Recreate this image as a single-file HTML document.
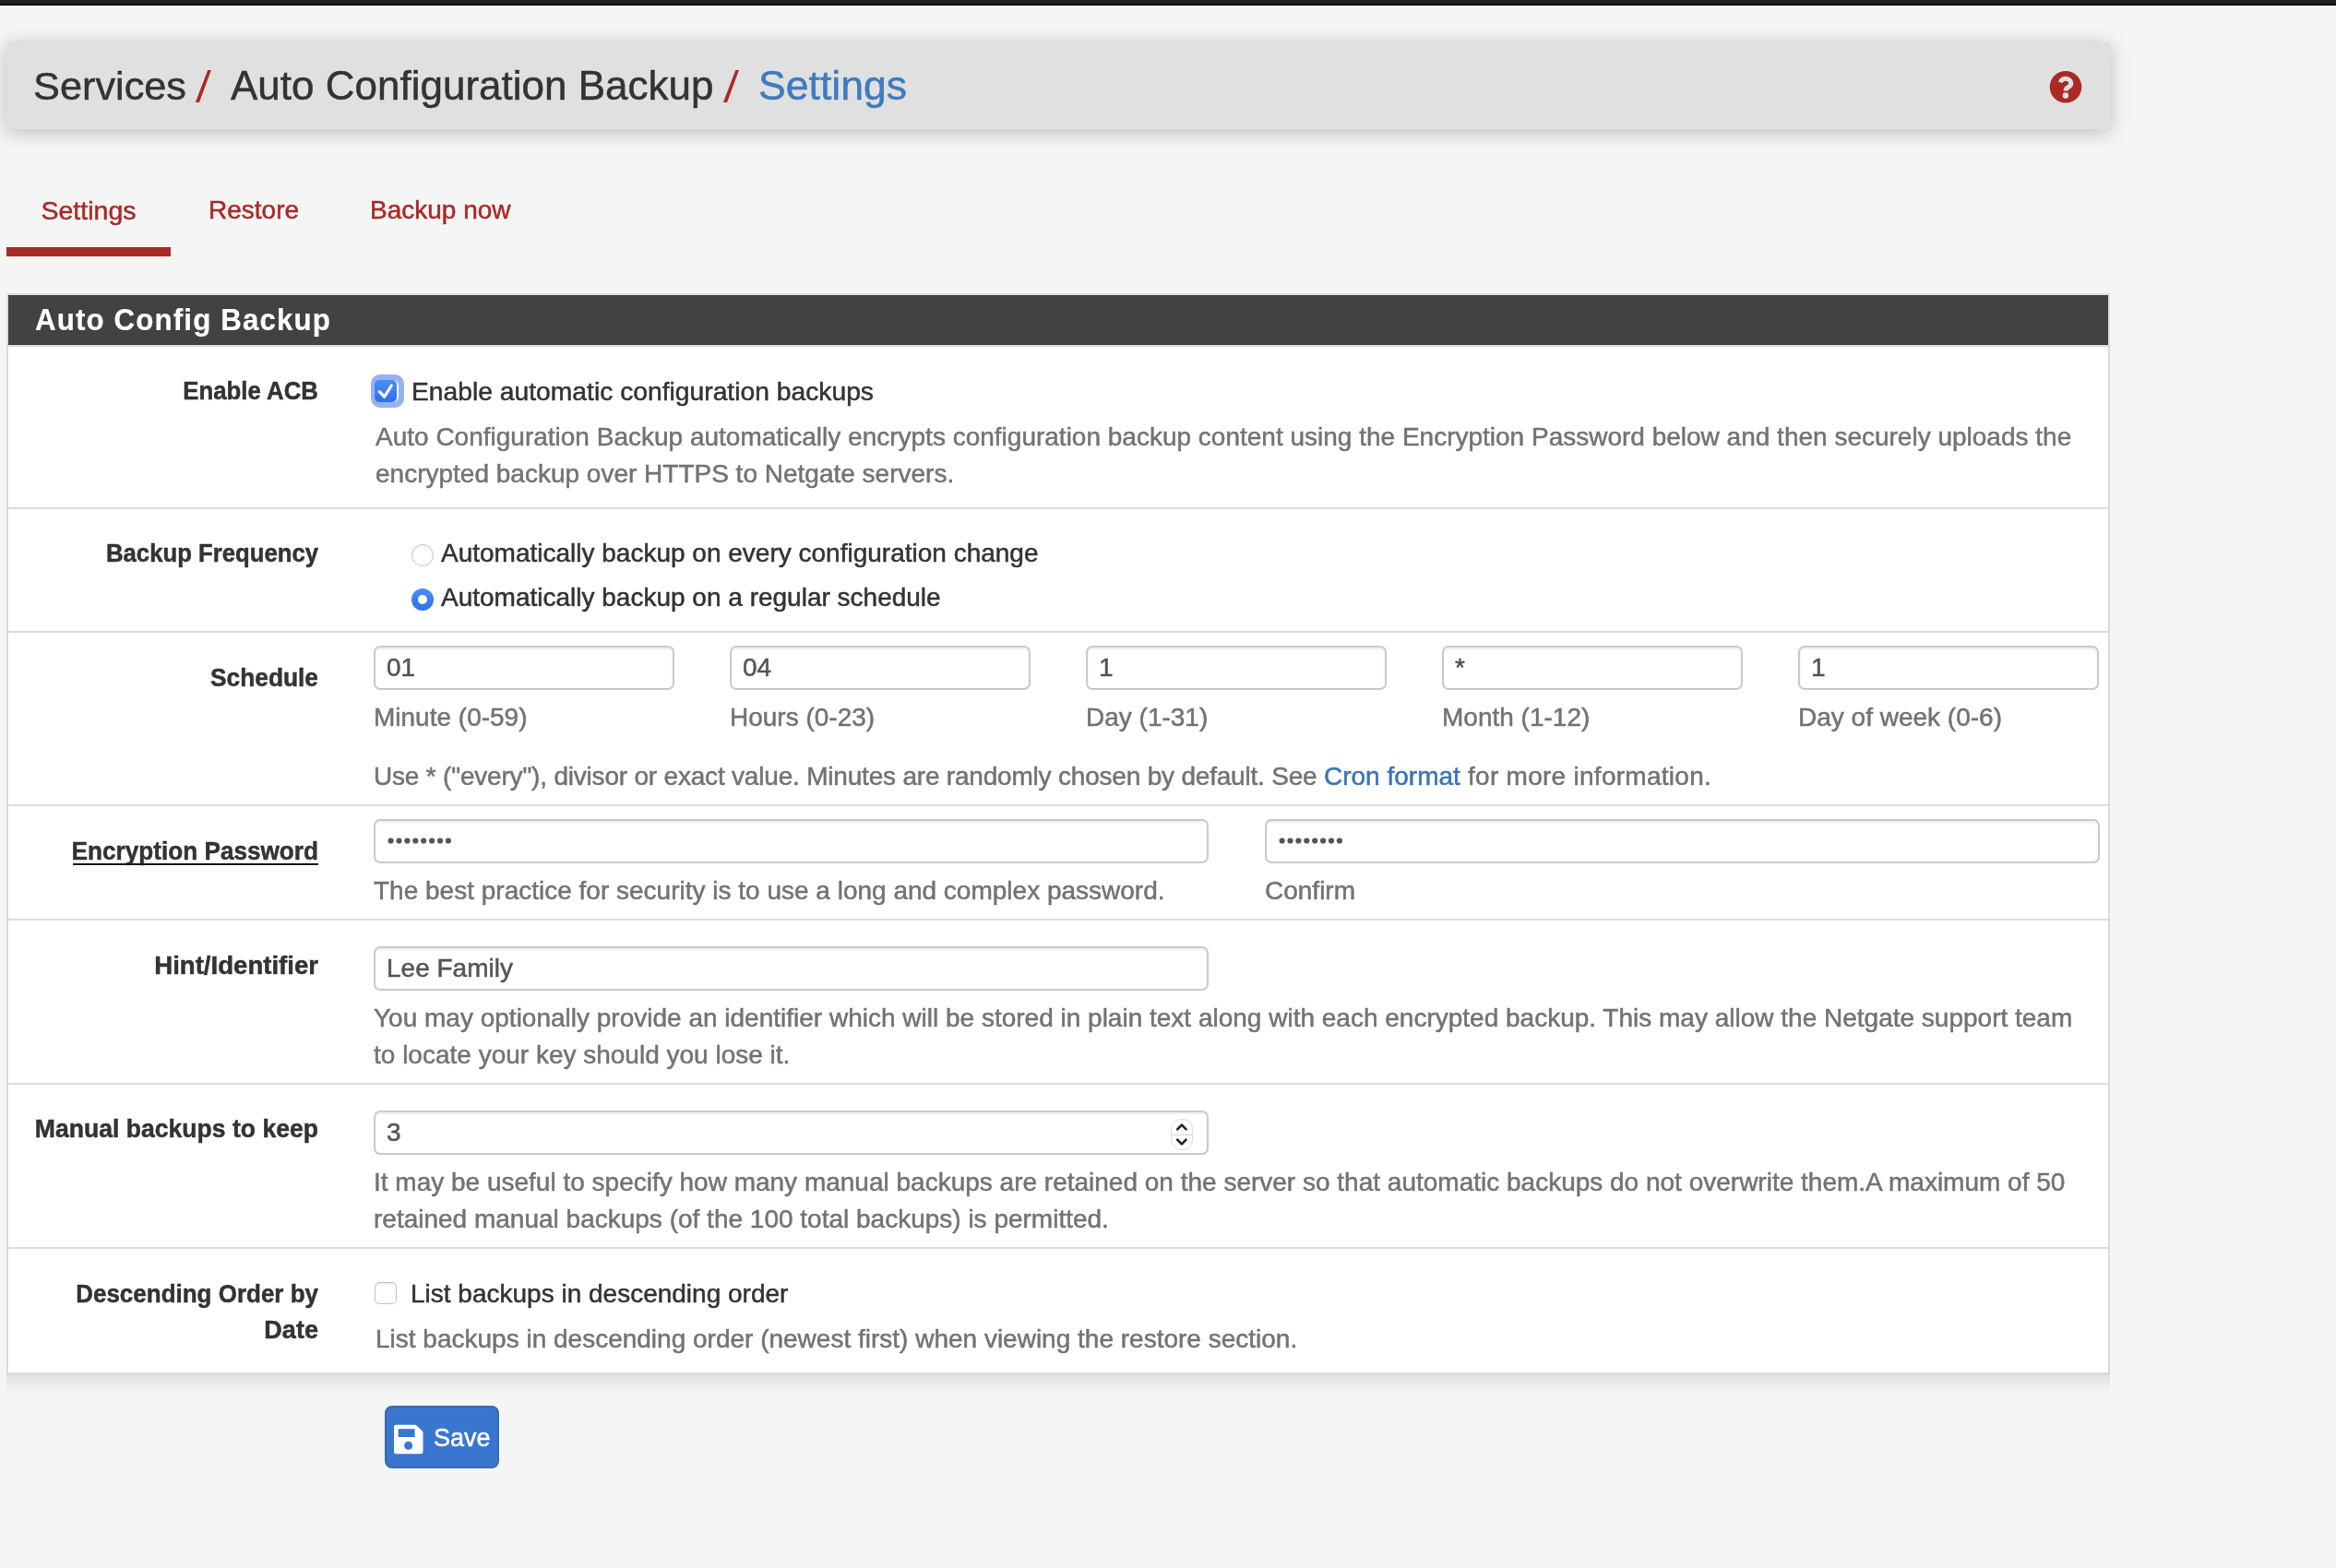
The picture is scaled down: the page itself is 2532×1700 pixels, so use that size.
<!DOCTYPE html>
<html><head><meta charset="utf-8">
<style>
html,body{margin:0;padding:0;background:#f5f5f5;}
body{width:2532px;height:1700px;overflow:hidden;position:relative;font-family:"Liberation Sans",sans-serif;color:#333;}
#w{position:absolute;left:0;top:0;width:2532px;height:1700px;will-change:transform;-webkit-text-stroke-width:0.5px;}
.a{position:absolute;white-space:nowrap;}
.t28{font-size:28px;line-height:28px;}
.bc{position:absolute;white-space:nowrap;font-size:44px;line-height:44px;color:#333;}
.help{position:absolute;white-space:nowrap;font-size:28px;line-height:40px;color:#737373;}
.lbl{position:absolute;left:0;width:345px;text-align:right;font-weight:bold;font-size:28px;line-height:28px;color:#333;white-space:nowrap;transform-origin:345px 0;}
.inp{position:absolute;box-sizing:border-box;background:#fff;border:2px solid #cacaca;border-radius:7px;box-shadow:inset 0 2px 3px rgba(0,0,0,.07);}
.itxt{position:absolute;font-size:28px;line-height:28px;color:#555;white-space:nowrap;}
.sep{position:absolute;left:9px;width:2276px;height:2px;background:#dcdcdc;}
</style></head>
<body><div id="w">
<!-- top bar -->
<div class="a" style="left:0;top:0;width:2532px;height:4px;background:#212121;"></div>
<div class="a" style="left:0;top:4px;width:2532px;height:2px;background:#000;"></div>

<!-- breadcrumb panel -->
<div class="a" style="left:7px;top:46px;width:2280px;height:94px;background:#e0e0e0;box-shadow:0 3px 20px rgba(0,0,0,.24);"></div>
<div class="bc" style="left:36px;top:71px;font-size:43.3px;">Services</div>
<svg class="a" style="left:0;top:0;" width="900" height="130"><polygon points="225.15,76 228.9,76 216,111 211.9,111" fill="#ab2a25"/><polygon points="797.25,76 801,76 788.1,111 784,111" fill="#ab2a25"/></svg>
<div class="bc" style="left:250px;top:71px;font-size:44px;">Auto Configuration Backup</div>
<div class="bc" style="left:822px;top:71px;font-size:44.6px;color:#3e7bbf;">Settings</div>
<!-- help icon -->
<svg class="a" style="left:2221px;top:76px;" width="36" height="36" viewBox="0 0 36 36">
<circle cx="18" cy="18.3" r="17.3" fill="#ab2a25"/>
<path d="M12.2 13.2 A6 5.6 0 0 1 23.9 14.2 C23.9 17 21.6 18.1 19.8 19.2 C18.4 20 18.1 20.8 18.1 22.6" fill="none" stroke="#e0e0e0" stroke-width="5"/>
<circle cx="17.9" cy="27.5" r="3.2" fill="#e0e0e0"/>
</svg>

<!-- tabs -->
<div class="a" style="left:44.5px;top:214px;font-size:28.5px;line-height:28px;color:#a82a27;">Settings</div>
<div class="a t28" style="left:226px;top:214px;color:#a82a27;">Restore</div>
<div class="a t28" style="left:401px;top:214px;color:#a82a27;">Backup now</div>
<div class="a" style="left:7px;top:268px;width:178px;height:10px;background:#a82a27;"></div>

<!-- panel -->
<div class="a" style="left:7px;top:1490px;width:2280px;height:20px;background:linear-gradient(rgba(0,0,0,.085),rgba(0,0,0,0));"></div>
<div class="a" style="left:7px;top:318px;width:2280px;height:1172px;box-sizing:border-box;background:#fff;border:2px solid #dadada;"></div>
<div class="a" style="left:9px;top:320px;width:2276px;height:54px;background:#424242;"></div>
<div class="a" style="left:9px;top:374px;width:2276px;height:2px;background:#dcdcdc;"></div>
<div class="a" style="left:38px;top:330px;font-size:33.3px;line-height:33px;font-weight:bold;color:#fff;letter-spacing:1.2px;transform:scaleX(0.94);transform-origin:0 0;-webkit-text-stroke-width:0.2px;">Auto Config Backup</div>

<!-- row 1 -->
<div class="lbl" style="top:410.3px;transform:scaleX(0.922);">Enable ACB</div>
<div class="a" style="left:402px;top:406px;width:36px;height:36px;border-radius:10px;background:#96b2f2;"></div>
<div class="a" style="left:406px;top:412px;width:26px;height:24px;border-radius:6px;background:#fff;"></div>
<div class="a" style="left:406px;top:412px;width:24px;height:24px;border-radius:5px;background:linear-gradient(#4a8cf4,#2f70ec);"></div>
<svg class="a" style="left:406px;top:411px;" width="26" height="25" viewBox="0 0 26 25"><path d="M5.3 13.6L10.6 19.2L18.3 7" fill="none" stroke="#fff" stroke-width="3.2" stroke-linecap="round" stroke-linejoin="round"/></svg>
<div class="a" style="left:446px;top:410px;font-size:28.25px;line-height:28px;">Enable automatic configuration backups</div>
<div class="help" style="left:407px;top:454px;">Auto Configuration Backup automatically encrypts configuration backup content using the Encryption Password below and then securely uploads the<br>encrypted backup over HTTPS to Netgate servers.</div>
<div class="sep" style="top:550px;"></div>

<!-- row 2 -->
<div class="lbl" style="top:586.3px;transform:scaleX(0.918);">Backup Frequency</div>
<div class="a" style="left:446px;top:590px;width:24px;height:24px;box-sizing:border-box;border-radius:50%;border:1.5px solid #c4c4c4;background:#fff;box-shadow:inset 0 1px 3px rgba(0,0,0,.08);"></div>
<div class="a t28" style="left:478px;top:586px;">Automatically backup on every configuration change</div>
<div class="a" style="left:446px;top:638px;width:24px;height:24px;border-radius:50%;background:linear-gradient(#4a8cf4,#2f70ec);"></div>
<div class="a" style="left:453.3px;top:645.3px;width:9.4px;height:9.4px;border-radius:50%;background:#fff;"></div>
<div class="a t28" style="left:478px;top:634px;">Automatically backup on a regular schedule</div>
<div class="sep" style="top:684px;"></div>

<!-- row 3 schedule -->
<div class="lbl" style="top:720.8px;transform:scaleX(0.940);">Schedule</div>
<div class="inp" style="left:405px;top:700px;width:326px;height:48px;"></div>
<div class="inp" style="left:791px;top:700px;width:326px;height:48px;"></div>
<div class="inp" style="left:1177px;top:700px;width:326px;height:48px;"></div>
<div class="inp" style="left:1563px;top:700px;width:326px;height:48px;"></div>
<div class="inp" style="left:1949px;top:700px;width:326px;height:48px;"></div>
<div class="itxt" style="left:419px;top:710px;">01</div>
<div class="itxt" style="left:805px;top:710px;">04</div>
<div class="itxt" style="left:1191px;top:710px;">1</div>
<div class="itxt" style="left:1577px;top:710px;">*</div>
<div class="itxt" style="left:1963px;top:710px;">1</div>
<div class="help" style="left:405px;top:758px;">Minute (0-59)</div>
<div class="help" style="left:791px;top:758px;">Hours (0-23)</div>
<div class="help" style="left:1177px;top:758px;">Day (1-31)</div>
<div class="help" style="left:1563px;top:758px;">Month (1-12)</div>
<div class="help" style="left:1949px;top:758px;">Day of week (0-6)</div>
<div class="help" style="left:405px;top:822px;letter-spacing:-0.2px;">Use * ("every"), divisor or exact value. Minutes are randomly chosen by default. See</div>
<div class="help" style="left:1435px;top:822px;color:#3a74b7;">Cron format</div>
<div class="help" style="left:1583px;top:822px;letter-spacing:0.27px;">&nbsp;for more information.</div>
<div class="sep" style="top:872px;"></div>

<!-- row 4 password -->
<div class="lbl" style="top:908.6px;transform:scaleX(0.934);">Encryption Password</div>
<div class="a" style="left:79px;top:936px;width:266px;height:2px;background:#1a1a1a;"></div>
<div class="inp" style="left:405px;top:888px;width:905px;height:48px;"></div>
<div class="inp" style="left:1371px;top:888px;width:905px;height:48px;"></div>
<svg class="a" style="left:405px;top:900px;" width="100" height="24" fill="#555"><circle cx="18.6" cy="11.5" r="3.1"/><circle cx="27.5" cy="11.5" r="3.1"/><circle cx="36.4" cy="11.5" r="3.1"/><circle cx="45.3" cy="11.5" r="3.1"/><circle cx="54.2" cy="11.5" r="3.1"/><circle cx="63.1" cy="11.5" r="3.1"/><circle cx="72.0" cy="11.5" r="3.1"/><circle cx="80.9" cy="11.5" r="3.1"/></svg>
<svg class="a" style="left:1371px;top:900px;" width="100" height="24" fill="#555"><circle cx="18.6" cy="11.5" r="3.1"/><circle cx="27.5" cy="11.5" r="3.1"/><circle cx="36.4" cy="11.5" r="3.1"/><circle cx="45.3" cy="11.5" r="3.1"/><circle cx="54.2" cy="11.5" r="3.1"/><circle cx="63.1" cy="11.5" r="3.1"/><circle cx="72.0" cy="11.5" r="3.1"/><circle cx="80.9" cy="11.5" r="3.1"/></svg>
<div class="help" style="left:405px;top:946px;">The best practice for security is to use a long and complex password.</div>
<div class="help" style="left:1371px;top:946px;">Confirm</div>
<div class="sep" style="top:996px;"></div>

<!-- row 5 hint -->
<div class="lbl" style="top:1032.7px;transform:scaleX(0.985);">Hint/Identifier</div>
<div class="inp" style="left:405px;top:1026px;width:905px;height:48px;"></div>
<div class="itxt" style="left:419px;top:1036px;">Lee Family</div>
<div class="help" style="left:405px;top:1084px;">You may optionally provide an identifier which will be stored in plain text along with each encrypted backup. This may allow the Netgate support team<br>to locate your key should you lose it.</div>
<div class="sep" style="top:1174px;"></div>

<!-- row 6 manual -->
<div class="lbl" style="top:1210.3px;transform:scaleX(0.949);">Manual backups to keep</div>
<div class="inp" style="left:405px;top:1204px;width:905px;height:48px;"></div>
<div class="itxt" style="left:419px;top:1214px;">3</div>
<div class="a" style="left:1269px;top:1213px;width:24px;height:34px;box-sizing:border-box;border:1px solid #dedede;border-radius:11px;background:#fff;"></div>
<div class="a" style="left:1270px;top:1229.5px;width:22px;height:1.5px;background:#d4d4d4;"></div>
<svg class="a" style="left:1269px;top:1213px;" width="24" height="34" viewBox="0 0 24 34"><path d="M7.2 11.4L11.9 6.6L16.6 11.4M7.2 22.6L11.9 27.4L16.6 22.6" fill="none" stroke="#222" stroke-width="2.6" stroke-linecap="round" stroke-linejoin="round"/></svg>
<div class="help" style="left:405px;top:1262px;">It may be useful to specify how many manual backups are retained on the server so that automatic backups do not overwrite them.A maximum of 50<br>retained manual backups (of the 100 total backups) is permitted.</div>
<div class="sep" style="top:1352px;"></div>

<!-- row 7 desc -->
<div class="lbl" style="top:1389.1px;transform:scaleX(0.928);">Descending Order by</div>
<div class="lbl" style="top:1428.3px;transform:scaleX(0.967);">Date</div>
<div class="a" style="left:406px;top:1390px;width:24px;height:24px;box-sizing:border-box;border-radius:5px;border:1.5px solid #c4c4c4;background:#fff;box-shadow:inset 0 2px 3px rgba(0,0,0,.08);"></div>
<div class="a t28" style="left:445px;top:1389px;">List backups in descending order</div>
<div class="help" style="left:407px;top:1432px;">List backups in descending order (newest first) when viewing the restore section.</div>

<!-- save -->
<div class="a" style="left:417px;top:1524px;width:124px;height:68px;box-sizing:border-box;border-radius:8px;background:#3a76cf;border:2px solid #386aaa;"></div>
<svg class="a" style="left:427px;top:1544px;" width="32" height="33" viewBox="0 0 32 33">
<path d="M2.5 0.7H23.7L31.5 8.2V29.7A2.5 2.5 0 0 1 29 32.2H2.5A2.5 2.5 0 0 1 0 29.7V3.2A2.5 2.5 0 0 1 2.5 0.7Z" fill="#fff"/>
<rect x="4.6" y="5.2" width="18" height="8.8" fill="#3a76cf"/>
<circle cx="15.7" cy="23.3" r="4.5" fill="#3a76cf"/>
</svg>
<div class="a" style="left:470px;top:1546px;font-size:27px;line-height:27px;color:#fff;">Save</div>
</div></body></html>
